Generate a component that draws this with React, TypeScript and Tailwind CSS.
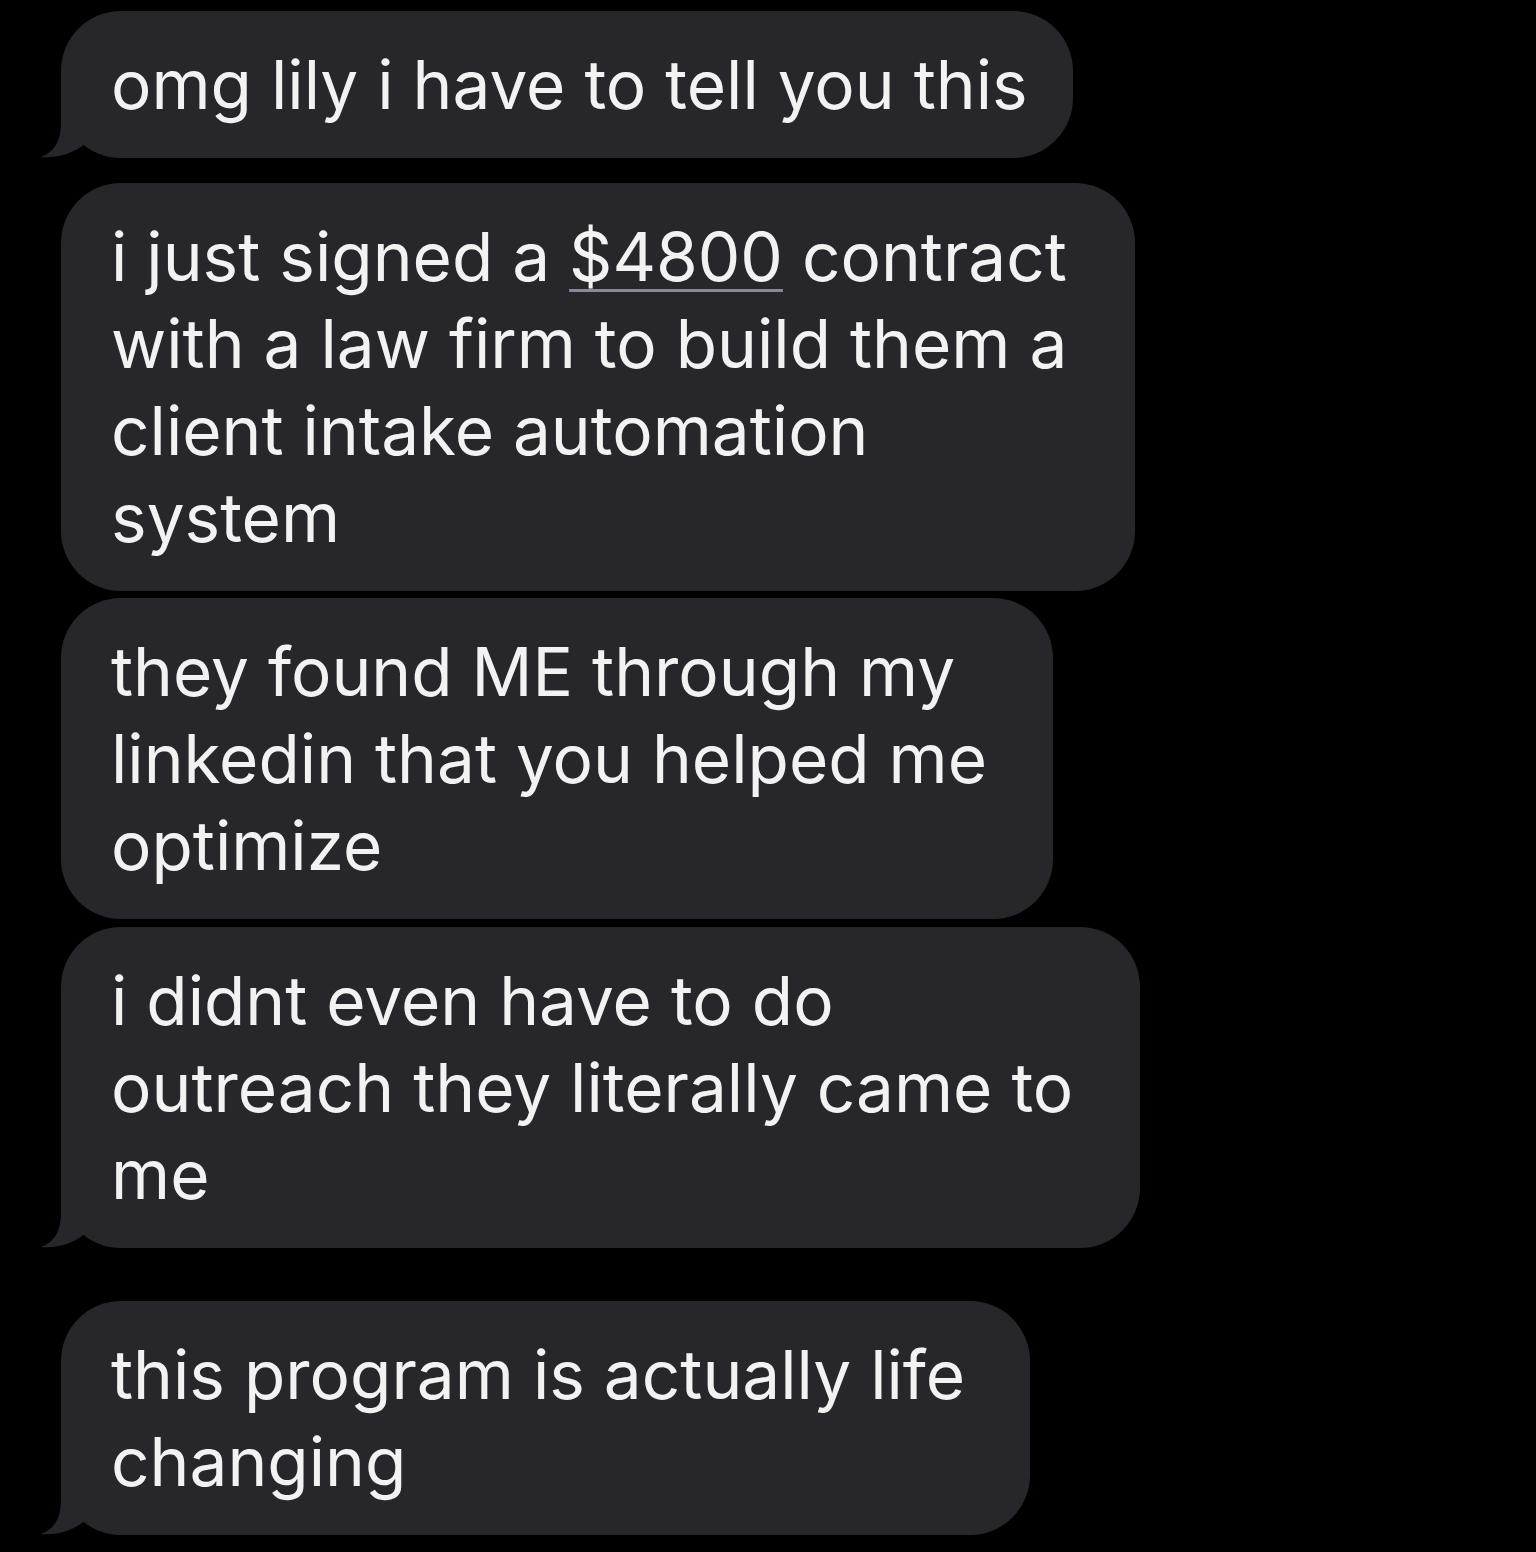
import React from 'react';

type Bubble = {
  lines: React.ReactNode[];
  width: string;
  gap: string;
  tail?: boolean;
};

const Tail = () => (
  <svg
    className="absolute left-[-20px] bottom-0"
    width="80"
    height="60"
    viewBox="-20 -60 80 60"
  >
    <path
      d="M0,-60 L0,-36 C0,-16 -7,-6 -20,-1 C-6,0 12,-3 26,-16 C34,-7 44,-2 58,0 L60,0 L60,-60 Z"
      fill="#27262b"
    />
  </svg>
);

const bubbles: Bubble[] = [
  { lines: ['omg lily i have to tell you this'], width: 'w-[1012px]', gap: 'mt-[11px]', tail: true },
  {
    lines: [
      <>
        i just signed a{' '}
        <span className="underline decoration-[#8d879a] decoration-[3px] underline-offset-[8px]">$4800</span> contract
      </>,
      'with a law firm to build them a',
      'client intake automation',
      'system',
    ],
    width: 'w-[1074px]',
    gap: 'mt-[25px]',
  },
  {
    lines: ['they found ME through my', 'linkedin that you helped me', 'optimize'],
    width: 'w-[992px]',
    gap: 'mt-[7px]',
  },
  {
    lines: ['i didnt even have to do', 'outreach they literally came to', 'me'],
    width: 'w-[1079px]',
    gap: 'mt-[8px]',
    tail: true,
  },
  {
    lines: ['this program is actually life', 'changing'],
    width: 'w-[969px]',
    gap: 'mt-[53px]',
    tail: true,
  },
];

export default function App() {
  return (
    <div className="w-[1536px] h-[1552px] bg-black overflow-hidden">
      <div className="flex flex-col items-start pl-[61px]">
        {bubbles.map((b, i) => (
          <div
            key={i}
            className={`relative ${b.gap} ${b.width} rounded-[60px] bg-[#27262b] pl-[50px] py-[30px] text-[67.5px] leading-[87px] text-[#f2f2f2] font-['Inter','Noto_Sans',sans-serif]`}
          >
            {b.tail && <Tail />}
            {b.lines.map((l, j) => (
              <div key={j} className="relative whitespace-nowrap">
                {l}
              </div>
            ))}
          </div>
        ))}
      </div>
    </div>
  );
}
